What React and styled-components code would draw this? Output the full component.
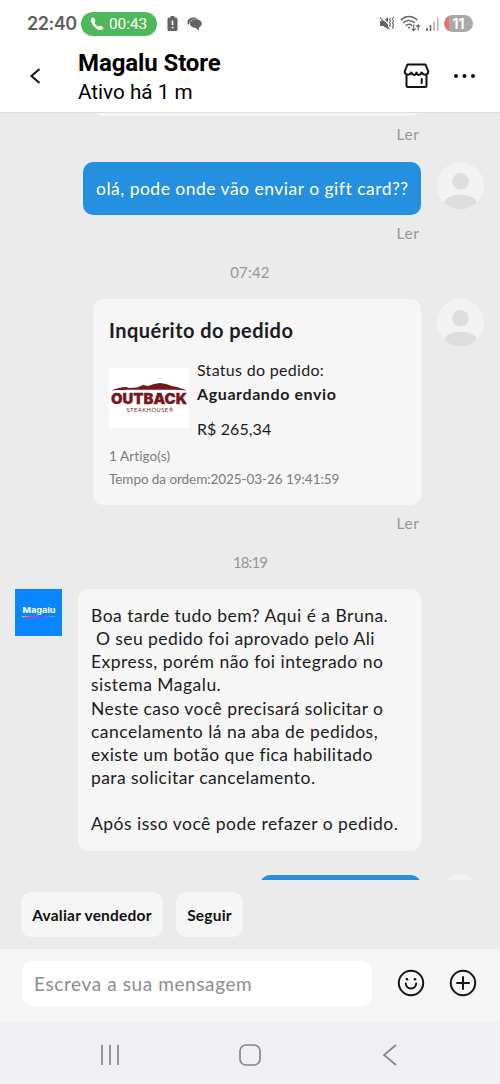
import React from 'react'
import styled, { createGlobalStyle } from 'styled-components'

const GlobalStyle = createGlobalStyle`
    * {
        box-sizing: border-box;
    }
    body {
        margin: 0;
        background-color: #ebebeb;
        font-family: Lato, "Noto Sans", sans-serif;
        color: #1c1c1c;
    }
`
const Screen = styled.div`
    display: flex;
    flex-direction: column;
    width: 500px;
    height: 1084px;
    overflow: hidden;
`
const StatusBar = styled.div`
    flex: 0 0 47px;
    display: flex;
    align-items: center;
    padding: 0 27px;
    background-color: #fff;
    color: #5f5f5f;
`
const Clock = styled.div`
    width: 54px;
    font: 600 18px/24px Inter, sans-serif;
    letter-spacing: -0.5px;
    white-space: nowrap;
`
const CallPill = styled.div`
    display: flex;
    align-items: center;
    gap: 5px;
    width: 76px;
    height: 24px;
    padding-left: 9px;
    margin-right: 10px;
    border-radius: 12px;
    background-color: #4fb85a;
    color: #fff;
    font: 400 15.3px/24px Roboto, sans-serif;
`
const StatusIcons = styled.div`
    display: flex;
    align-items: center;
    gap: ${props => props.gap}px;
    margin-left: ${props => props.right ? 'auto' : '0'};
`
const Battery = styled.div`
    width: 29px;
    height: 17px;
    border-radius: 9px;
    background: linear-gradient(to right, #e4756a 5px, #a9a9a9 5px);
    color: #fff;
    font: 700 14px/17px Inter, sans-serif;
    text-align: center;
`
const Header = styled.div`
    flex: 0 0 66px;
    display: flex;
    align-items: center;
    padding: 0 25px 5px 29px;
    background-color: #fff;
    border-bottom: 1px solid #dedede;
    font-family: Roboto, sans-serif;
    color: #000;
`
const BackButton = styled.div`
    display: flex;
    margin-top: -2px;
`
const Contact = styled.div`
    flex: 1 1 auto;
    margin-left: 36px;
    padding-top: 1px;
`
const Name = styled.div`
    font-size: 24px;
    line-height: 30px;
    font-weight: 700;
    letter-spacing: -0.1px;
`
const Activity = styled.div`
    font-size: 20.7px;
    line-height: 29px;
`
const HeaderActions = styled.div`
    display: flex;
    align-items: center;
    gap: 24px;
    margin-top: -2px;
`
const Chat = styled.div`
    flex: 0 0 767px;
    display: flex;
    flex-direction: column;
    overflow: hidden;
    background-color: #ebebeb;
`
const Row = styled.div`
    flex: none;
    display: flex;
    align-items: flex-start;
    justify-content: ${props => props.incoming ? 'flex-start' : 'flex-end'};
    gap: 16px;
    padding: 0 16px 0 15px;
    margin-top: ${props => props.top || 0}px;
`
const Column = styled.div`
    display: flex;
    flex-direction: column;
    align-items: flex-end;
`
const Bubble = styled.div`
    width: ${props => props.width}px;
    height: 53px;
    padding: 0 14px 0 13px;
    border-radius: 10px;
    background-color: #2590e0;
    color: #fff;
    font-size: 17.5px;
    line-height: 53px;
    letter-spacing: 0.49px;
    white-space: nowrap;
`
const Card = styled.div`
    width: 328px;
    height: ${props => props.height}px;
    padding: 19px 16px;
    border-radius: 10px;
    background-color: #f6f6f6;
`
const Read = styled.div`
    margin: 8px 1.5px 0 0;
    font-size: 15.5px;
    line-height: 20px;
    letter-spacing: 0.6px;
    color: #979797;
`
const Time = styled.div`
    flex: none;
    margin: 19px 0 0;
    text-align: center;
    font-size: 15px;
    line-height: 20px;
    letter-spacing: ${props => props.spacing}px;
    color: #979797;
`
const AvatarSpace = styled.div`
    width: 47px;
    height: 47px;
`
const CardTitle = styled.div`
    font-size: 20px;
    line-height: 24px;
    font-weight: 700;
    letter-spacing: 0.46px;
`
const Order = styled.div`
    display: flex;
    gap: 8px;
    margin-top: 16px;
`
const Picture = styled.div`
    display: flex;
    width: 80px;
    height: 60px;
    margin-top: 10px;
    background-color: #fff;
`
const OrderInfo = styled.div`
    font-size: 16px;
    line-height: 24px;
    letter-spacing: 0.3px;
`
const OrderStatus = styled.div`
    font-weight: 700;
    letter-spacing: 0.6px;
`
const Price = styled.div`
    margin-top: 11px;
    letter-spacing: 0.1px;
`
const Note = styled.div`
    font-size: 13.5px;
    line-height: 23px;
    letter-spacing: ${props => props.spacing}px;
    color: #7b7b7b;
    white-space: nowrap;
`
const Notes = styled.div`
    margin-top: 4px;
`
const Message = styled.div`
    width: 343px;
    height: 262px;
    padding: 15px 13px;
    border-radius: 10px;
    background-color: #f6f6f6;
`
const Line = styled.div`
    height: 23.15px;
    font-size: 17.5px;
    line-height: 23.15px;
    letter-spacing: ${props => props.spacing}px;
    white-space: pre;
`
const QuickActions = styled.div`
    flex: 0 0 68px;
    display: flex;
    gap: 13px;
    padding: 12px 21px;
    background-color: #ebebeb;
`
const QuickButton = styled.button`
    width: ${props => props.width}px;
    height: 45px;
    padding: 0;
    border: none;
    border-radius: 10px;
    background-color: #f6f6f6;
    color: #111;
    font: 700 15.5px Lato, sans-serif;
    letter-spacing: 0.22px;
    white-space: nowrap;
`
const Composer = styled.div`
    flex: 0 0 73px;
    display: flex;
    align-items: flex-start;
    padding: 12px 22px;
    background-color: #f6f6f6;
`
const Input = styled.input`
    width: 350px;
    height: 45px;
    padding: 0 12px 1px;
    margin-right: 25px;
    border: none;
    border-radius: 10px;
    background-color: #fff;
    font: 400 19px Lato, sans-serif;
    letter-spacing: 0.6px;
    &::placeholder {
        color: #8e8e8e;
        opacity: 1;
    }
`
const ComposerActions = styled.div`
    display: flex;
    gap: 24px;
    padding-top: 8px;
`
const NavBar = styled.div`
    flex: 0 0 63px;
    display: flex;
    align-items: center;
    justify-content: space-between;
    padding: 2px 98px 0;
    background-color: #f0f0f2;
`

const Avatar = () => (
    <AvatarSpace>
        <svg width="47" height="47" viewBox="0 0 47 47">
            <circle cx="23.5" cy="23.5" r="23.5" fill="#f3f3f3" />
            <circle cx="23.5" cy="19.3" r="8.3" fill="#dedede" />
            <path d="M7 40.500C10 30 37 30 40 40.500A23.500 23.500 0 0 1 7 40.500Z" fill="#dedede" />
        </svg>
    </AvatarSpace>
)

const MagaluLogo = () => (
    <svg width="47" height="47" viewBox="0 0 47 47">
        <defs>
            <linearGradient id="rainbow">
                <stop offset="0" stopColor="#e9b949" />
                <stop offset="0.25" stopColor="#e34a78" />
                <stop offset="0.6" stopColor="#7a4bea" />
                <stop offset="1" stopColor="#35b5e8" />
            </linearGradient>
        </defs>
        <rect width="47" height="47" fill="#0a86ff" />
        <text x="7.500" y="24" textLength="33" lengthAdjust="spacingAndGlyphs" fontFamily="Inter, sans-serif" fontWeight="700" fontSize="8" fill="#fff">Magalu</text>
        <rect x="7" y="27" width="33" height="1.200" fill="url(#rainbow)" />
    </svg>
)

const OutbackLogo = () => (
    <svg width="80" height="60" viewBox="0 0 80 60" fill="#741820">
        <path d="M2 22.500C8 20.500 12 19 17 19L20 20L28 19.500L34 17L39 18L45 16L51 15L57 16L63 18L68 19L78 22.500C65 21.500 55 21.800 40 21.800S15 21.500 2 22.500Z" />
        <text x="2" y="35.500" textLength="76" lengthAdjust="spacingAndGlyphs" fontFamily="Inter, sans-serif" fontWeight="900" fontSize="14" stroke="#741820" strokeWidth="0.3">OUTBACK</text>
        <text x="17.500" y="44" textLength="47" fontFamily="Lato, sans-serif" fontSize="5.800">STEAKHOUSE®</text>
    </svg>
)

const message = [
    { text: 'Boa tarde tudo bem? Aqui é a Bruna.', spacing: 0.48 },
    { text: ' O seu pedido foi aprovado pelo Ali', spacing: 0.43 },
    { text: 'Express, porém não foi integrado no', spacing: 0.47 },
    { text: 'sistema Magalu.', spacing: 0.49 },
    { text: 'Neste caso você precisará solicitar o', spacing: 0.44 },
    { text: 'cancelamento lá na aba de pedidos,', spacing: 0.48 },
    { text: 'existe um botão que fica habilitado', spacing: 0.4 },
    { text: 'para solicitar cancelamento.', spacing: 0.43 },
    { text: '', spacing: 0 },
    { text: 'Após isso você pode refazer o pedido.', spacing: 0.48 },
]

const App = () => {
    return (
        <Screen>
            <GlobalStyle />
            <StatusBar>
                <Clock>22:40</Clock>
                <CallPill>
                    <svg width="14" height="14" viewBox="0 0 14 14" fill="#fff">
                        <path d="M1.500 1.500C2.500.3 3.600.3 4.300 1.500L5.300 3.400C5.600 4.200 4.600 4.800 4.400 5.400C5.100 7.200 6.800 8.900 8.600 9.600C9.200 9.400 9.800 8.400 10.600 8.700L12.600 9.800C13.600 10.500 13.600 11.600 12.500 12.500C8.500 15.500-1.500 6 1.500 1.500Z" />
                    </svg>
                    00:43
                </CallPill>
                <StatusIcons gap={9}>
                    <svg width="11" height="15" viewBox="0 0 11 15">
                        <path d="M3.500 0h4v1.500H9A1.500 1.500 0 0 1 10.500 3v10.500A1.500 1.500 0 0 1 9 15H2A1.500 1.500 0 0 1 .5 13.500V3A1.500 1.500 0 0 1 2 1.500h1.500Z" fill="#636363" />
                        <path d="M5.500 4.500v4.500M5.500 10.800v1.700" stroke="#fff" strokeWidth="1.600" />
                    </svg>
                    <svg width="15" height="14" viewBox="0 0 15 14" fill="#636363">
                        <path d="M1.200 8C-.8 4.500 1.500.6 6 .5C8 .4 9.500.9 10.500 1.700C6 1.200 2.300 3.500 2.200 7Z" />
                        <path d="M8.800 2.200C12.300 2.200 14.700 3.900 14.700 6.400C14.700 8.200 13.600 9.500 12.200 10.200L11.800 13.700L8.700 10.800C5.300 10.800 3 9 3 6.500C3 3.900 5.400 2.200 8.800 2.200Z" />
                    </svg>
                </StatusIcons>
                <StatusIcons gap={5} right>
                    <svg width="16" height="15" viewBox="0 0 16 15">
                        <path d="M1 5h3L9 1v12L4 10H1Z" fill="#656565" />
                        <path d="M1.500 .3L11 9.500" stroke="#fff" strokeWidth="1.400" />
                        <path d="M1 1.500L10.500 13.500" stroke="#656565" strokeWidth="1.200" />
                        <path d="M11.500 2l-1 1.500 1 1.500-1 1.500 1 1.500-1 1.500 1 1.500M14.500 1l-1 2 1 2-1 2 1 2-1 2 1 2" stroke="#656565" strokeWidth="1.100" fill="none" />
                    </svg>
                    <svg width="21" height="17" viewBox="0 0 21 17" fill="none" stroke="#656565" strokeWidth="1.500">
                        <path d="M.7 5.300C5.300.3 12.700.3 17.300 5.300M3.200 8C6.400 4.600 11.600 4.600 14.800 8M5.700 10.700C7.600 8.700 10.400 8.700 12.300 10.700" />
                        <circle cx="9" cy="12.700" r="1" fill="#656565" stroke="none" />
                        <path d="M13.700 9.500v6M11.700 13.700l2 2 2-2M18.200 15.500V10M16.300 11.800l1.900-2 1.900 2" strokeWidth="1.200" />
                    </svg>
                    <svg width="13" height="14" viewBox="0 0 13 14">
                        <path d="M1 11v3M4.500 8v6" stroke="#656565" strokeWidth="1.600" />
                        <path d="M8 4.500V14M11.700 1v13" stroke="#b5b5b5" strokeWidth="1.600" />
                    </svg>
                    <Battery>11</Battery>
                </StatusIcons>
            </StatusBar>
            <Header>
                <BackButton>
                    <svg width="13" height="16" viewBox="0 0 13 16" fill="none" stroke="#111" strokeWidth="2">
                        <path d="M10.500 1L2.500 8L10.500 15" />
                    </svg>
                </BackButton>
                <Contact>
                    <Name>Magalu Store</Name>
                    <Activity>Ativo há 1 m</Activity>
                </Contact>
                <HeaderActions>
                    <svg width="27" height="26" viewBox="0 0 27 26" fill="none" stroke="#111" strokeWidth="2" strokeLinejoin="round" strokeLinecap="round">
                        <path d="M4.500 1.500H22.500L25.300 8.500C25.300 12 20.500 13 18.800 9.500C17.500 12.700 14.300 12.700 13.500 9.500C12.700 12.700 9.500 12.700 8.200 9.500C6.500 13 1.700 12 1.700 8.500Z" />
                        <path d="M3.500 12.500V22.500Q3.500 24 5 24H22Q23.500 24 23.500 22.500V12.500M18.700 16V20" />
                    </svg>
                    <svg width="21" height="6" viewBox="0 0 21 6" fill="#111">
                        <circle cx="2" cy="3" r="2" />
                        <circle cx="10.500" cy="3" r="2" />
                        <circle cx="19" cy="3" r="2" />
                    </svg>
                </HeaderActions>
            </Header>
            <Chat>
                <Row top={-40}>
                    <Column>
                        <Card height={43} />
                        <Read>Ler</Read>
                    </Column>
                    <AvatarSpace />
                </Row>
                <Row top={18}>
                    <Column>
                        <Bubble width={338}>olá, pode onde vão enviar o gift card??</Bubble>
                        <Read>Ler</Read>
                    </Column>
                    <Avatar />
                </Row>
                <Time spacing={0.2}>07:42</Time>
                <Row top={17}>
                    <Column>
                        <Card height={206}>
                            <CardTitle>Inquérito do pedido</CardTitle>
                            <Order>
                                <Picture><OutbackLogo /></Picture>
                                <OrderInfo>
                                    <div>Status do pedido:</div>
                                    <OrderStatus>Aguardando envio</OrderStatus>
                                    <Price>R$ 265,34</Price>
                                </OrderInfo>
                            </Order>
                            <Notes>
                                <Note spacing={0.1}>1 Artigo(s)</Note>
                                <Note spacing={-0.06}>Tempo da ordem:2025-03-26 19:41:59</Note>
                            </Notes>
                        </Card>
                        <Read>Ler</Read>
                    </Column>
                    <Avatar />
                </Row>
                <Time spacing={-0.9}>18:19</Time>
                <Row incoming top={17}>
                    <MagaluLogo />
                    <Message>
                        {message.map((line, i) => <Line key={i} spacing={line.spacing}>{line.text}</Line>)}
                    </Message>
                </Row>
                <Row top={24}>
                    <Bubble width={161} />
                    <Avatar />
                </Row>
            </Chat>
            <QuickActions>
                <QuickButton width={142}>Avaliar vendedor</QuickButton>
                <QuickButton width={67}>Seguir</QuickButton>
            </QuickActions>
            <Composer>
                <Input placeholder="Escreva a sua mensagem" />
                <ComposerActions>
                    <svg width="28" height="28" viewBox="0 0 28 28" fill="none" stroke="#151515" strokeWidth="2" strokeLinecap="round">
                        <circle cx="14" cy="14" r="12.200" />
                        <circle cx="10" cy="10.300" r="1.300" fill="#151515" stroke="none" />
                        <circle cx="18" cy="10.300" r="1.300" fill="#151515" stroke="none" />
                        <path d="M8.800 14.500C9.200 21 18.800 21 19.200 14.500" />
                    </svg>
                    <svg width="28" height="28" viewBox="0 0 28 28" fill="none" stroke="#151515" strokeWidth="2" strokeLinecap="round">
                        <circle cx="14" cy="14" r="12.200" />
                        <path d="M8 14H20M14 8V20" />
                    </svg>
                </ComposerActions>
            </Composer>
            <NavBar>
                <svg width="24" height="22" viewBox="0 0 24 22" stroke="#85858a" strokeWidth="1.700">
                    <path d="M4 1V21M12 1V21M20 1V21" />
                </svg>
                <svg width="22" height="22" viewBox="0 0 22 22" fill="none" stroke="#85858a" strokeWidth="1.700">
                    <rect x="1" y="1" width="20" height="20" rx="6" />
                </svg>
                <svg width="24" height="22" viewBox="0 0 24 22" fill="none" stroke="#85858a" strokeWidth="1.700">
                    <path d="M18 1L6 11L18 21" />
                </svg>
            </NavBar>
        </Screen>
    )
}

export default App
